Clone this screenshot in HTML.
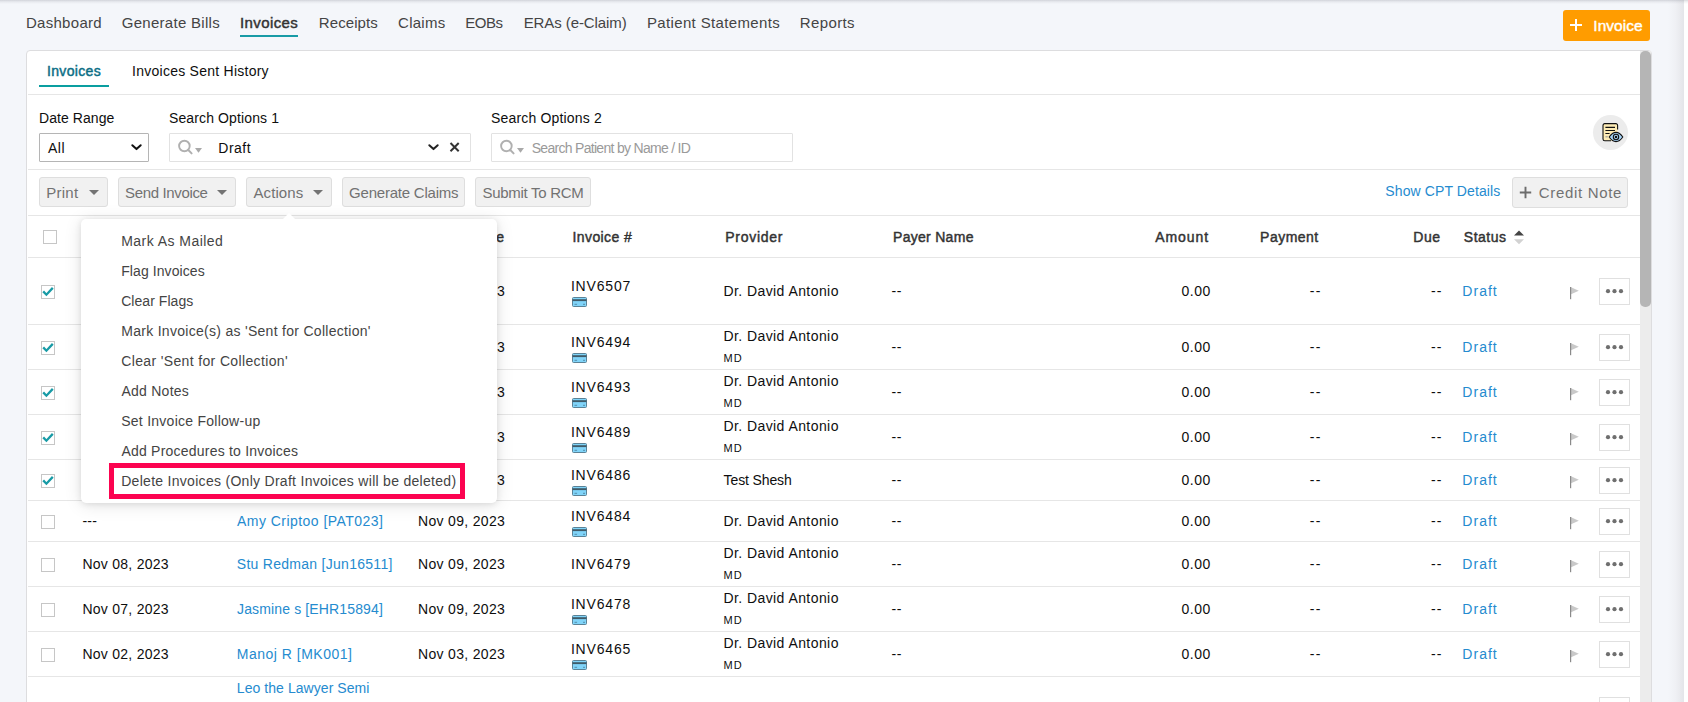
<!DOCTYPE html><html lang="en"><head><meta charset="utf-8"><title>Invoices</title><style>
*{box-sizing:border-box;margin:0;padding:0}
html,body{width:1688px;height:702px;overflow:hidden}
body{background:#f4f6fa;font-family:"Liberation Sans",sans-serif;position:relative}
.t{position:absolute;white-space:pre;display:block}
.a{position:absolute;display:block}
.topsh{left:0;top:0;width:1688px;height:4px;background:linear-gradient(rgba(120,122,135,.28),rgba(120,122,135,.1) 45%,rgba(120,122,135,0))}
.rstrip{left:1668px;top:0;width:20px;height:702px;background:linear-gradient(90deg,#f4f6fa 0,#eff0f4 40%,#e4e5e9 80%,#fff 80%,#fff 100%)}
.card{left:26px;top:50px;width:1626px;height:660px;background:#fff;border:1px solid #dddddf;border-radius:4px 4px 0 0}
.hl{left:28px;width:1612px;height:1px;background:#e6e6e6}
.navul{left:240px;top:35px;width:58px;height:2px;background:#189ba6}
.tabul{left:39px;top:85px;width:70px;height:2px;background:#0a9ea0}
.obtn{left:1563px;top:10px;width:87px;height:31px;background:#ff9c00;border-radius:3px}
.sel{left:39px;top:133px;width:110px;height:29px;border:1px solid #b5b5b5;border-radius:1px;background:#fff}
.sbox{top:133px;height:29px;border:1px solid #e2e2e2;border-radius:1px;background:#fff}
.btn{top:177px;height:30px;background:#f1f1f1;border:1px solid #dedede;border-radius:3px}
.caret{width:0;height:0;border-left:5px solid transparent;border-right:5px solid transparent;border-top:5px solid #737373}
.scrt{left:1640px;top:51px;width:11px;height:651px;background:#ececec}
.scrb{left:1640px;top:51px;width:11px;height:256px;background:#b5b5b5;border-radius:5px}
.circ{left:1593px;top:115px;width:35px;height:35px;border-radius:50%;background:#ececec}
.cb{width:14px;height:14px;border:1px solid #c6c6c6;background:#fff}
.more{width:31px;height:27px;border:1px solid #e0e0e0;background:#fff}
.menu{left:81px;top:219px;width:416px;height:284px;background:#fff;border-radius:5px;box-shadow:0 1px 6px rgba(0,0,0,.10),0 2px 18px rgba(0,0,0,.11)}
.arrow{left:282px;top:213px;width:0;height:0;border-left:7px solid transparent;border-right:7px solid transparent;border-bottom:7px solid #fff}
.red{left:109px;top:463px;width:356px;height:36px;border:5px solid #fc0350}
</style></head><body>
<i class="a rstrip"></i><i class="a topsh"></i>
<i class="a navul"></i>
<i class="a obtn"></i>
<svg class="a" style="left:1569px;top:18px" width="14" height="14" viewBox="0 0 14 14"><path d="M7 1v12M1 7h12" stroke="#fff" stroke-width="2" fill="none"/></svg>
<i class="a card"></i>
<i class="a scrt"></i><i class="a scrb"></i>
<i class="a tabul"></i>
<i class="a hl" style="top:94px"></i>
<i class="a hl" style="top:169px"></i>
<i class="a hl" style="top:215px"></i>
<i class="a hl" style="top:257px"></i>
<i class="a hl" style="top:324px"></i>
<i class="a hl" style="top:369px"></i>
<i class="a hl" style="top:414px"></i>
<i class="a hl" style="top:459px"></i>
<i class="a hl" style="top:500px"></i>
<i class="a hl" style="top:541px"></i>
<i class="a hl" style="top:586px"></i>
<i class="a hl" style="top:631px"></i>
<i class="a hl" style="top:676px"></i>
<i class="a sel"></i>
<svg class="a" style="left:130px;top:142px" width="13" height="10" viewBox="0 0 13 10"><path d="M2.300 3.200l4.200 3.900L10.700 3.200" stroke="#111" stroke-width="2" fill="none" stroke-linecap="round" stroke-linejoin="round"/></svg>
<i class="a sbox" style="left:169px;width:302px"></i>
<i class="a sbox" style="left:491px;width:302px"></i>
<svg class="a" style="left:178px;top:139px" width="26" height="16" viewBox="0 0 26 16"><circle cx="6.400" cy="7" r="5.300" stroke="#b0b0b0" stroke-width="1.900" fill="none"/><path d="M10.300 11l3.300 3.400" stroke="#b0b0b0" stroke-width="2" stroke-linecap="round"/><path d="M17 9h7l-3.5 4.8z" fill="#a9a9a9"/></svg>
<svg class="a" style="left:500px;top:139px" width="26" height="16" viewBox="0 0 26 16"><circle cx="6.400" cy="7" r="5.300" stroke="#b0b0b0" stroke-width="1.900" fill="none"/><path d="M10.300 11l3.300 3.400" stroke="#b0b0b0" stroke-width="2" stroke-linecap="round"/><path d="M17 9h7l-3.5 4.8z" fill="#a9a9a9"/></svg>
<svg class="a" style="left:427px;top:142px" width="13" height="10" viewBox="0 0 13 10"><path d="M2.300 3.200l4.200 3.900L10.700 3.200" stroke="#222" stroke-width="2" fill="none" stroke-linecap="round" stroke-linejoin="round"/></svg>
<svg class="a" style="left:448px;top:141px" width="13" height="12" viewBox="0 0 13 12"><path d="M2.500 2l8.200 8.200M10.700 2l-8.200 8.200" stroke="#333" stroke-width="2" fill="none"/></svg>
<i class="a circ"></i>
<svg class="a" style="left:1601px;top:122px" width="24" height="22" viewBox="0 0 24 22">
<rect x="2" y="1.600" width="14.600" height="17.200" rx="1.800" fill="#fdebb4"/><path d="M16.600 7.400V3.400a1.800 1.800 0 0 0-1.800-1.800H3.800a1.800 1.800 0 0 0-1.800 1.800V17a1.800 1.800 0 0 0 1.800 1.800H10" fill="none" stroke="#111" stroke-width="1.100"/>
<path d="M4.4 5.4h9.6M4.4 8.5h9.6M4.4 11.5h4.2" stroke="#111" stroke-width="1.1"/><path d="M4.4 14.8h2.4" stroke="#999" stroke-width="1.1"/>
<path d="M8.2 15c2.2-3.2 4.4-4.6 6.8-4.6s4.600 1.400 6.800 4.600c-2.200 3.200-4.400 4.600-6.800 4.600s-4.600-1.400-6.800-4.600z" fill="#a9d5f8" stroke="#111" stroke-width="1.1"/>
<circle cx="15" cy="15" r="2.7" fill="#a9d5f8" stroke="#111" stroke-width="1.1"/><rect x="13.9" y="13.9" width="2.2" height="2.2" fill="#111"/>
</svg>
<i class="a btn" style="left:39px;width:69px;height:30px"></i>
<i class="a btn" style="left:118px;width:118px;height:30px"></i>
<i class="a btn" style="left:246px;width:86px;height:30px"></i>
<i class="a btn" style="left:342px;width:123px;height:30px"></i>
<i class="a btn" style="left:475px;width:116px;height:30px"></i>
<i class="a btn" style="left:1512px;width:116px;height:31px"></i>
<i class="a caret" style="left:89px;top:190px"></i>
<i class="a caret" style="left:217px;top:190px"></i>
<i class="a caret" style="left:313px;top:190px"></i>
<svg class="a" style="left:1519px;top:186px" width="13" height="13" viewBox="0 0 13 13"><path d="M6.500 0.800v11.400M0.800 6.500h11.400" stroke="#6c6c6c" stroke-width="1.900" fill="none"/></svg>
<i class="a cb" style="left:43px;top:230px"></i>
<svg class="a" style="left:1514px;top:230px" width="10" height="15" viewBox="0 0 10 15"><path d="M0 5.600L5 0.600l5 5z" fill="#444"/><path d="M0 9.200h10l-5 5z" fill="#d2d2d2"/></svg>
<svg class="a" style="left:572px;top:297px" width="15" height="10" viewBox="0 0 15 10"><rect x="0.500" y="0.500" width="14" height="9" rx="1" fill="#80d4f9" stroke="#5b8296" stroke-width="1"/><rect x="0.500" y="2.200" width="14" height="1.900" fill="#3f5b69"/><path d="M2.500 7.300h2.600M11 7.300h2" stroke="#4f86a0" stroke-width="0.900"/></svg>
<i class="a cb" style="left:41px;top:285px"></i>
<svg class="a" style="left:41px;top:285px" width="14" height="14" viewBox="0 0 14 14"><path d="M2.200 6.400l3.200 3.300l6.400-6.800" stroke="#189ba6" stroke-width="2.300" fill="none"/></svg>
<svg class="a" style="left:1569px;top:287px" width="11" height="13" viewBox="0 0 11 13"><path d="M2 0.300L9.800 3.800L2 7.300z" fill="#c9c9c9"/><rect x="1" y="0" width="1.200" height="12.200" fill="#8a8a8a"/></svg>
<i class="a more" style="left:1599px;top:278px"></i>
<svg class="a" style="left:1604px;top:288px" width="21" height="6" viewBox="0 0 21 6"><circle cx="4" cy="3.200" r="2.100" fill="#6f6f6f"/><circle cx="10.500" cy="3.200" r="2.100" fill="#6f6f6f"/><circle cx="17" cy="3.200" r="2.100" fill="#6f6f6f"/></svg>
<svg class="a" style="left:572px;top:353px" width="15" height="10" viewBox="0 0 15 10"><rect x="0.500" y="0.500" width="14" height="9" rx="1" fill="#80d4f9" stroke="#5b8296" stroke-width="1"/><rect x="0.500" y="2.200" width="14" height="1.900" fill="#3f5b69"/><path d="M2.500 7.300h2.600M11 7.300h2" stroke="#4f86a0" stroke-width="0.900"/></svg>
<i class="a cb" style="left:41px;top:341px"></i>
<svg class="a" style="left:41px;top:341px" width="14" height="14" viewBox="0 0 14 14"><path d="M2.200 6.400l3.200 3.300l6.400-6.800" stroke="#189ba6" stroke-width="2.300" fill="none"/></svg>
<svg class="a" style="left:1569px;top:343px" width="11" height="13" viewBox="0 0 11 13"><path d="M2 0.300L9.800 3.800L2 7.300z" fill="#c9c9c9"/><rect x="1" y="0" width="1.200" height="12.200" fill="#8a8a8a"/></svg>
<i class="a more" style="left:1599px;top:334px"></i>
<svg class="a" style="left:1604px;top:344px" width="21" height="6" viewBox="0 0 21 6"><circle cx="4" cy="3.200" r="2.100" fill="#6f6f6f"/><circle cx="10.500" cy="3.200" r="2.100" fill="#6f6f6f"/><circle cx="17" cy="3.200" r="2.100" fill="#6f6f6f"/></svg>
<svg class="a" style="left:572px;top:398px" width="15" height="10" viewBox="0 0 15 10"><rect x="0.500" y="0.500" width="14" height="9" rx="1" fill="#80d4f9" stroke="#5b8296" stroke-width="1"/><rect x="0.500" y="2.200" width="14" height="1.900" fill="#3f5b69"/><path d="M2.500 7.300h2.600M11 7.300h2" stroke="#4f86a0" stroke-width="0.900"/></svg>
<i class="a cb" style="left:41px;top:386px"></i>
<svg class="a" style="left:41px;top:386px" width="14" height="14" viewBox="0 0 14 14"><path d="M2.200 6.400l3.200 3.300l6.400-6.800" stroke="#189ba6" stroke-width="2.300" fill="none"/></svg>
<svg class="a" style="left:1569px;top:388px" width="11" height="13" viewBox="0 0 11 13"><path d="M2 0.300L9.800 3.800L2 7.300z" fill="#c9c9c9"/><rect x="1" y="0" width="1.200" height="12.200" fill="#8a8a8a"/></svg>
<i class="a more" style="left:1599px;top:379px"></i>
<svg class="a" style="left:1604px;top:389px" width="21" height="6" viewBox="0 0 21 6"><circle cx="4" cy="3.200" r="2.100" fill="#6f6f6f"/><circle cx="10.500" cy="3.200" r="2.100" fill="#6f6f6f"/><circle cx="17" cy="3.200" r="2.100" fill="#6f6f6f"/></svg>
<svg class="a" style="left:572px;top:443px" width="15" height="10" viewBox="0 0 15 10"><rect x="0.500" y="0.500" width="14" height="9" rx="1" fill="#80d4f9" stroke="#5b8296" stroke-width="1"/><rect x="0.500" y="2.200" width="14" height="1.900" fill="#3f5b69"/><path d="M2.500 7.300h2.600M11 7.300h2" stroke="#4f86a0" stroke-width="0.900"/></svg>
<i class="a cb" style="left:41px;top:431px"></i>
<svg class="a" style="left:41px;top:431px" width="14" height="14" viewBox="0 0 14 14"><path d="M2.200 6.400l3.200 3.300l6.400-6.800" stroke="#189ba6" stroke-width="2.300" fill="none"/></svg>
<svg class="a" style="left:1569px;top:433px" width="11" height="13" viewBox="0 0 11 13"><path d="M2 0.300L9.800 3.800L2 7.300z" fill="#c9c9c9"/><rect x="1" y="0" width="1.200" height="12.200" fill="#8a8a8a"/></svg>
<i class="a more" style="left:1599px;top:424px"></i>
<svg class="a" style="left:1604px;top:434px" width="21" height="6" viewBox="0 0 21 6"><circle cx="4" cy="3.200" r="2.100" fill="#6f6f6f"/><circle cx="10.500" cy="3.200" r="2.100" fill="#6f6f6f"/><circle cx="17" cy="3.200" r="2.100" fill="#6f6f6f"/></svg>
<svg class="a" style="left:572px;top:486px" width="15" height="10" viewBox="0 0 15 10"><rect x="0.500" y="0.500" width="14" height="9" rx="1" fill="#80d4f9" stroke="#5b8296" stroke-width="1"/><rect x="0.500" y="2.200" width="14" height="1.900" fill="#3f5b69"/><path d="M2.500 7.300h2.600M11 7.300h2" stroke="#4f86a0" stroke-width="0.900"/></svg>
<i class="a cb" style="left:41px;top:474px"></i>
<svg class="a" style="left:41px;top:474px" width="14" height="14" viewBox="0 0 14 14"><path d="M2.200 6.400l3.200 3.300l6.400-6.800" stroke="#189ba6" stroke-width="2.300" fill="none"/></svg>
<svg class="a" style="left:1569px;top:476px" width="11" height="13" viewBox="0 0 11 13"><path d="M2 0.300L9.800 3.800L2 7.300z" fill="#c9c9c9"/><rect x="1" y="0" width="1.200" height="12.200" fill="#8a8a8a"/></svg>
<i class="a more" style="left:1599px;top:467px"></i>
<svg class="a" style="left:1604px;top:477px" width="21" height="6" viewBox="0 0 21 6"><circle cx="4" cy="3.200" r="2.100" fill="#6f6f6f"/><circle cx="10.500" cy="3.200" r="2.100" fill="#6f6f6f"/><circle cx="17" cy="3.200" r="2.100" fill="#6f6f6f"/></svg>
<svg class="a" style="left:572px;top:527px" width="15" height="10" viewBox="0 0 15 10"><rect x="0.500" y="0.500" width="14" height="9" rx="1" fill="#80d4f9" stroke="#5b8296" stroke-width="1"/><rect x="0.500" y="2.200" width="14" height="1.900" fill="#3f5b69"/><path d="M2.500 7.300h2.600M11 7.300h2" stroke="#4f86a0" stroke-width="0.900"/></svg>
<i class="a cb" style="left:41px;top:515px"></i>
<svg class="a" style="left:1569px;top:517px" width="11" height="13" viewBox="0 0 11 13"><path d="M2 0.300L9.800 3.800L2 7.300z" fill="#c9c9c9"/><rect x="1" y="0" width="1.200" height="12.200" fill="#8a8a8a"/></svg>
<i class="a more" style="left:1599px;top:508px"></i>
<svg class="a" style="left:1604px;top:518px" width="21" height="6" viewBox="0 0 21 6"><circle cx="4" cy="3.200" r="2.100" fill="#6f6f6f"/><circle cx="10.500" cy="3.200" r="2.100" fill="#6f6f6f"/><circle cx="17" cy="3.200" r="2.100" fill="#6f6f6f"/></svg>
<i class="a cb" style="left:41px;top:558px"></i>
<svg class="a" style="left:1569px;top:560px" width="11" height="13" viewBox="0 0 11 13"><path d="M2 0.300L9.800 3.800L2 7.300z" fill="#c9c9c9"/><rect x="1" y="0" width="1.200" height="12.200" fill="#8a8a8a"/></svg>
<i class="a more" style="left:1599px;top:551px"></i>
<svg class="a" style="left:1604px;top:561px" width="21" height="6" viewBox="0 0 21 6"><circle cx="4" cy="3.200" r="2.100" fill="#6f6f6f"/><circle cx="10.500" cy="3.200" r="2.100" fill="#6f6f6f"/><circle cx="17" cy="3.200" r="2.100" fill="#6f6f6f"/></svg>
<svg class="a" style="left:572px;top:615px" width="15" height="10" viewBox="0 0 15 10"><rect x="0.500" y="0.500" width="14" height="9" rx="1" fill="#80d4f9" stroke="#5b8296" stroke-width="1"/><rect x="0.500" y="2.200" width="14" height="1.900" fill="#3f5b69"/><path d="M2.500 7.300h2.600M11 7.300h2" stroke="#4f86a0" stroke-width="0.900"/></svg>
<i class="a cb" style="left:41px;top:603px"></i>
<svg class="a" style="left:1569px;top:605px" width="11" height="13" viewBox="0 0 11 13"><path d="M2 0.300L9.800 3.800L2 7.300z" fill="#c9c9c9"/><rect x="1" y="0" width="1.200" height="12.200" fill="#8a8a8a"/></svg>
<i class="a more" style="left:1599px;top:596px"></i>
<svg class="a" style="left:1604px;top:606px" width="21" height="6" viewBox="0 0 21 6"><circle cx="4" cy="3.200" r="2.100" fill="#6f6f6f"/><circle cx="10.500" cy="3.200" r="2.100" fill="#6f6f6f"/><circle cx="17" cy="3.200" r="2.100" fill="#6f6f6f"/></svg>
<svg class="a" style="left:572px;top:660px" width="15" height="10" viewBox="0 0 15 10"><rect x="0.500" y="0.500" width="14" height="9" rx="1" fill="#80d4f9" stroke="#5b8296" stroke-width="1"/><rect x="0.500" y="2.200" width="14" height="1.900" fill="#3f5b69"/><path d="M2.500 7.300h2.600M11 7.300h2" stroke="#4f86a0" stroke-width="0.900"/></svg>
<i class="a cb" style="left:41px;top:648px"></i>
<svg class="a" style="left:1569px;top:650px" width="11" height="13" viewBox="0 0 11 13"><path d="M2 0.300L9.800 3.800L2 7.300z" fill="#c9c9c9"/><rect x="1" y="0" width="1.200" height="12.200" fill="#8a8a8a"/></svg>
<i class="a more" style="left:1599px;top:641px"></i>
<svg class="a" style="left:1604px;top:651px" width="21" height="6" viewBox="0 0 21 6"><circle cx="4" cy="3.200" r="2.100" fill="#6f6f6f"/><circle cx="10.500" cy="3.200" r="2.100" fill="#6f6f6f"/><circle cx="17" cy="3.200" r="2.100" fill="#6f6f6f"/></svg>
<i class="a more" style="left:1599px;top:697px"></i>
<span class="t" style="left:25.9px;top:12.0px;font-size:15px;line-height:21px;letter-spacing:0.30px;color:#444;">Dashboard</span>
<span class="t" style="left:121.7px;top:12.0px;font-size:15px;line-height:21px;letter-spacing:0.29px;color:#444;">Generate Bills</span>
<span class="t" style="left:239.9px;top:12.0px;font-size:15px;line-height:21px;letter-spacing:0.41px;color:#333;-webkit-text-stroke:0.45px #333;">Invoices</span>
<span class="t" style="left:318.8px;top:12.0px;font-size:15px;line-height:21px;letter-spacing:0.09px;color:#444;">Receipts</span>
<span class="t" style="left:398.1px;top:12.0px;font-size:15px;line-height:21px;letter-spacing:0.24px;color:#444;">Claims</span>
<span class="t" style="left:465.3px;top:12.0px;font-size:15px;line-height:21px;letter-spacing:-0.50px;color:#444;">EOBs</span>
<span class="t" style="left:523.7px;top:12.0px;font-size:15px;line-height:21px;letter-spacing:-0.09px;color:#444;">ERAs (e-Claim)</span>
<span class="t" style="left:646.9px;top:12.0px;font-size:15px;line-height:21px;letter-spacing:0.36px;color:#444;">Patient Statements</span>
<span class="t" style="left:799.8px;top:12.0px;font-size:15px;line-height:21px;letter-spacing:0.37px;color:#444;">Reports</span>
<span class="t" style="left:1593.3px;top:15.0px;font-size:15.5px;line-height:21.5px;letter-spacing:0.03px;color:#fff;-webkit-text-stroke:0.4px #fff;">Invoice</span>
<span class="t" style="left:46.9px;top:61.0px;font-size:14px;line-height:20px;letter-spacing:0.36px;color:#0b6e85;-webkit-text-stroke:0.45px #0b6e85;">Invoices</span>
<span class="t" style="left:132.1px;top:61.0px;font-size:14px;line-height:20px;letter-spacing:0.25px;color:#0e0e0e;">Invoices Sent History</span>
<span class="t" style="left:39.1px;top:108.0px;font-size:14px;line-height:20px;letter-spacing:0.06px;color:#0e0e0e;">Date Range</span>
<span class="t" style="left:169.0px;top:108.0px;font-size:14px;line-height:20px;letter-spacing:0.12px;color:#0e0e0e;">Search Options 1</span>
<span class="t" style="left:491.0px;top:108.0px;font-size:14px;line-height:20px;letter-spacing:0.17px;color:#0e0e0e;">Search Options 2</span>
<span class="t" style="left:48.0px;top:138.0px;font-size:14px;line-height:20px;letter-spacing:0.50px;color:#0e0e0e;">All</span>
<span class="t" style="left:218.3px;top:138.0px;font-size:14px;line-height:20px;letter-spacing:0.50px;color:#0e0e0e;">Draft</span>
<span class="t" style="left:531.7px;top:138.0px;font-size:14px;line-height:20px;letter-spacing:-0.70px;color:#9a9a9a;">Search Patient by Name / ID</span>
<span class="t" style="left:46.3px;top:182.0px;font-size:15px;line-height:21px;letter-spacing:0.23px;color:#727272;">Print</span>
<span class="t" style="left:125.0px;top:182.0px;font-size:15px;line-height:21px;letter-spacing:-0.35px;color:#727272;">Send Invoice</span>
<span class="t" style="left:253.5px;top:182.0px;font-size:15px;line-height:21px;letter-spacing:0.08px;color:#727272;">Actions</span>
<span class="t" style="left:349.1px;top:182.0px;font-size:15px;line-height:21px;letter-spacing:-0.22px;color:#727272;">Generate Claims</span>
<span class="t" style="left:482.5px;top:182.0px;font-size:15px;line-height:21px;letter-spacing:-0.29px;color:#727272;">Submit To RCM</span>
<span class="t" style="left:1385.3px;top:181.0px;font-size:14px;line-height:20px;letter-spacing:0.11px;color:#258bcf;">Show CPT Details</span>
<span class="t" style="left:1538.8px;top:182.0px;font-size:15px;line-height:21px;letter-spacing:0.67px;color:#727272;">Credit Note</span>
<span class="t" style="left:418.3px;top:227.4px;font-size:14px;line-height:20px;letter-spacing:0.72px;color:#333;-webkit-text-stroke:0.45px #333;">Invoice Date</span>
<span class="t" style="left:572.5px;top:227.4px;font-size:14px;line-height:20px;letter-spacing:0.41px;color:#333;-webkit-text-stroke:0.45px #333;">Invoice #</span>
<span class="t" style="left:725.2px;top:227.4px;font-size:14px;line-height:20px;letter-spacing:0.74px;color:#333;-webkit-text-stroke:0.45px #333;">Provider</span>
<span class="t" style="left:893.0px;top:227.4px;font-size:14px;line-height:20px;letter-spacing:0.29px;color:#333;-webkit-text-stroke:0.45px #333;">Payer Name</span>
<span class="t" style="left:1155.2px;top:227.4px;font-size:14px;line-height:20px;letter-spacing:0.94px;color:#333;-webkit-text-stroke:0.45px #333;">Amount</span>
<span class="t" style="left:1260.1px;top:227.4px;font-size:14px;line-height:20px;letter-spacing:0.48px;color:#333;-webkit-text-stroke:0.45px #333;">Payment</span>
<span class="t" style="left:1413.2px;top:227.4px;font-size:14px;line-height:20px;letter-spacing:0.60px;color:#333;-webkit-text-stroke:0.45px #333;">Due</span>
<span class="t" style="left:1463.8px;top:227.4px;font-size:14px;line-height:20px;letter-spacing:0.50px;color:#333;-webkit-text-stroke:0.45px #333;">Status</span>
<span class="t" style="left:418.1px;top:281.2px;font-size:14px;line-height:20px;letter-spacing:0.31px;color:#0e0e0e;">Nov 09, 2023</span>
<span class="t" style="left:570.9px;top:275.5px;font-size:14px;line-height:20px;letter-spacing:0.82px;color:#0e0e0e;">INV6507</span>
<span class="t" style="left:723.4px;top:281.2px;font-size:14px;line-height:20px;letter-spacing:0.43px;color:#0e0e0e;">Dr. David Antonio</span>
<span class="t" style="left:891.5px;top:281.2px;font-size:14px;line-height:20px;letter-spacing:0.50px;color:#0e0e0e;">--</span>
<span class="t" style="left:1181.6px;top:281.2px;font-size:14px;line-height:20px;letter-spacing:0.47px;color:#0e0e0e;">0.00</span>
<span class="t" style="left:1309.8px;top:281.2px;font-size:14px;line-height:20px;letter-spacing:1.20px;color:#0e0e0e;">--</span>
<span class="t" style="left:1431.0px;top:281.2px;font-size:14px;line-height:20px;letter-spacing:1.20px;color:#0e0e0e;">--</span>
<span class="t" style="left:1462.3px;top:281.2px;font-size:14px;line-height:20px;letter-spacing:1.03px;color:#258bcf;">Draft</span>
<span class="t" style="left:418.1px;top:337.2px;font-size:14px;line-height:20px;letter-spacing:0.31px;color:#0e0e0e;">Nov 09, 2023</span>
<span class="t" style="left:570.9px;top:331.5px;font-size:14px;line-height:20px;letter-spacing:0.82px;color:#0e0e0e;">INV6494</span>
<span class="t" style="left:723.4px;top:326.0px;font-size:14px;line-height:20px;letter-spacing:0.43px;color:#0e0e0e;">Dr. David Antonio</span>
<span class="t" style="left:723.4px;top:349.6px;font-size:11px;line-height:17px;letter-spacing:1.10px;color:#0e0e0e;">MD</span>
<span class="t" style="left:891.5px;top:337.2px;font-size:14px;line-height:20px;letter-spacing:0.50px;color:#0e0e0e;">--</span>
<span class="t" style="left:1181.6px;top:337.2px;font-size:14px;line-height:20px;letter-spacing:0.47px;color:#0e0e0e;">0.00</span>
<span class="t" style="left:1309.8px;top:337.2px;font-size:14px;line-height:20px;letter-spacing:1.20px;color:#0e0e0e;">--</span>
<span class="t" style="left:1431.0px;top:337.2px;font-size:14px;line-height:20px;letter-spacing:1.20px;color:#0e0e0e;">--</span>
<span class="t" style="left:1462.3px;top:337.2px;font-size:14px;line-height:20px;letter-spacing:1.03px;color:#258bcf;">Draft</span>
<span class="t" style="left:418.1px;top:382.2px;font-size:14px;line-height:20px;letter-spacing:0.31px;color:#0e0e0e;">Nov 09, 2023</span>
<span class="t" style="left:570.9px;top:376.5px;font-size:14px;line-height:20px;letter-spacing:0.82px;color:#0e0e0e;">INV6493</span>
<span class="t" style="left:723.4px;top:371.0px;font-size:14px;line-height:20px;letter-spacing:0.43px;color:#0e0e0e;">Dr. David Antonio</span>
<span class="t" style="left:723.4px;top:394.6px;font-size:11px;line-height:17px;letter-spacing:1.10px;color:#0e0e0e;">MD</span>
<span class="t" style="left:891.5px;top:382.2px;font-size:14px;line-height:20px;letter-spacing:0.50px;color:#0e0e0e;">--</span>
<span class="t" style="left:1181.6px;top:382.2px;font-size:14px;line-height:20px;letter-spacing:0.47px;color:#0e0e0e;">0.00</span>
<span class="t" style="left:1309.8px;top:382.2px;font-size:14px;line-height:20px;letter-spacing:1.20px;color:#0e0e0e;">--</span>
<span class="t" style="left:1431.0px;top:382.2px;font-size:14px;line-height:20px;letter-spacing:1.20px;color:#0e0e0e;">--</span>
<span class="t" style="left:1462.3px;top:382.2px;font-size:14px;line-height:20px;letter-spacing:1.03px;color:#258bcf;">Draft</span>
<span class="t" style="left:418.1px;top:427.2px;font-size:14px;line-height:20px;letter-spacing:0.31px;color:#0e0e0e;">Nov 09, 2023</span>
<span class="t" style="left:570.9px;top:421.5px;font-size:14px;line-height:20px;letter-spacing:0.82px;color:#0e0e0e;">INV6489</span>
<span class="t" style="left:723.4px;top:416.0px;font-size:14px;line-height:20px;letter-spacing:0.43px;color:#0e0e0e;">Dr. David Antonio</span>
<span class="t" style="left:723.4px;top:439.6px;font-size:11px;line-height:17px;letter-spacing:1.10px;color:#0e0e0e;">MD</span>
<span class="t" style="left:891.5px;top:427.2px;font-size:14px;line-height:20px;letter-spacing:0.50px;color:#0e0e0e;">--</span>
<span class="t" style="left:1181.6px;top:427.2px;font-size:14px;line-height:20px;letter-spacing:0.47px;color:#0e0e0e;">0.00</span>
<span class="t" style="left:1309.8px;top:427.2px;font-size:14px;line-height:20px;letter-spacing:1.20px;color:#0e0e0e;">--</span>
<span class="t" style="left:1431.0px;top:427.2px;font-size:14px;line-height:20px;letter-spacing:1.20px;color:#0e0e0e;">--</span>
<span class="t" style="left:1462.3px;top:427.2px;font-size:14px;line-height:20px;letter-spacing:1.03px;color:#258bcf;">Draft</span>
<span class="t" style="left:418.1px;top:470.2px;font-size:14px;line-height:20px;letter-spacing:0.31px;color:#0e0e0e;">Nov 09, 2023</span>
<span class="t" style="left:570.9px;top:464.5px;font-size:14px;line-height:20px;letter-spacing:0.82px;color:#0e0e0e;">INV6486</span>
<span class="t" style="left:723.6px;top:470.2px;font-size:14px;line-height:20px;letter-spacing:-0.12px;color:#0e0e0e;">Test Shesh</span>
<span class="t" style="left:891.5px;top:470.2px;font-size:14px;line-height:20px;letter-spacing:0.50px;color:#0e0e0e;">--</span>
<span class="t" style="left:1181.6px;top:470.2px;font-size:14px;line-height:20px;letter-spacing:0.47px;color:#0e0e0e;">0.00</span>
<span class="t" style="left:1309.8px;top:470.2px;font-size:14px;line-height:20px;letter-spacing:1.20px;color:#0e0e0e;">--</span>
<span class="t" style="left:1431.0px;top:470.2px;font-size:14px;line-height:20px;letter-spacing:1.20px;color:#0e0e0e;">--</span>
<span class="t" style="left:1462.3px;top:470.2px;font-size:14px;line-height:20px;letter-spacing:1.03px;color:#258bcf;">Draft</span>
<span class="t" style="left:82.4px;top:511.2px;font-size:14px;line-height:20px;letter-spacing:0.30px;color:#0e0e0e;">---</span>
<span class="t" style="left:237.0px;top:511.2px;font-size:14px;line-height:20px;letter-spacing:0.46px;color:#258bcf;">Amy Criptoo [PAT023]</span>
<span class="t" style="left:418.1px;top:511.2px;font-size:14px;line-height:20px;letter-spacing:0.31px;color:#0e0e0e;">Nov 09, 2023</span>
<span class="t" style="left:570.9px;top:505.5px;font-size:14px;line-height:20px;letter-spacing:0.82px;color:#0e0e0e;">INV6484</span>
<span class="t" style="left:723.4px;top:511.2px;font-size:14px;line-height:20px;letter-spacing:0.43px;color:#0e0e0e;">Dr. David Antonio</span>
<span class="t" style="left:891.5px;top:511.2px;font-size:14px;line-height:20px;letter-spacing:0.50px;color:#0e0e0e;">--</span>
<span class="t" style="left:1181.6px;top:511.2px;font-size:14px;line-height:20px;letter-spacing:0.47px;color:#0e0e0e;">0.00</span>
<span class="t" style="left:1309.8px;top:511.2px;font-size:14px;line-height:20px;letter-spacing:1.20px;color:#0e0e0e;">--</span>
<span class="t" style="left:1431.0px;top:511.2px;font-size:14px;line-height:20px;letter-spacing:1.20px;color:#0e0e0e;">--</span>
<span class="t" style="left:1462.3px;top:511.2px;font-size:14px;line-height:20px;letter-spacing:1.03px;color:#258bcf;">Draft</span>
<span class="t" style="left:82.4px;top:554.2px;font-size:14px;line-height:20px;letter-spacing:0.27px;color:#0e0e0e;">Nov 08, 2023</span>
<span class="t" style="left:236.8px;top:554.2px;font-size:14px;line-height:20px;letter-spacing:0.28px;color:#258bcf;">Stu Redman [Jun16511]</span>
<span class="t" style="left:418.1px;top:554.2px;font-size:14px;line-height:20px;letter-spacing:0.31px;color:#0e0e0e;">Nov 09, 2023</span>
<span class="t" style="left:570.9px;top:554.2px;font-size:14px;line-height:20px;letter-spacing:0.82px;color:#0e0e0e;">INV6479</span>
<span class="t" style="left:723.4px;top:543.0px;font-size:14px;line-height:20px;letter-spacing:0.43px;color:#0e0e0e;">Dr. David Antonio</span>
<span class="t" style="left:723.4px;top:566.6px;font-size:11px;line-height:17px;letter-spacing:1.10px;color:#0e0e0e;">MD</span>
<span class="t" style="left:891.5px;top:554.2px;font-size:14px;line-height:20px;letter-spacing:0.50px;color:#0e0e0e;">--</span>
<span class="t" style="left:1181.6px;top:554.2px;font-size:14px;line-height:20px;letter-spacing:0.47px;color:#0e0e0e;">0.00</span>
<span class="t" style="left:1309.8px;top:554.2px;font-size:14px;line-height:20px;letter-spacing:1.20px;color:#0e0e0e;">--</span>
<span class="t" style="left:1431.0px;top:554.2px;font-size:14px;line-height:20px;letter-spacing:1.20px;color:#0e0e0e;">--</span>
<span class="t" style="left:1462.3px;top:554.2px;font-size:14px;line-height:20px;letter-spacing:1.03px;color:#258bcf;">Draft</span>
<span class="t" style="left:82.4px;top:599.2px;font-size:14px;line-height:20px;letter-spacing:0.27px;color:#0e0e0e;">Nov 07, 2023</span>
<span class="t" style="left:237.0px;top:599.2px;font-size:14px;line-height:20px;letter-spacing:0.14px;color:#258bcf;">Jasmine s [EHR15894]</span>
<span class="t" style="left:418.1px;top:599.2px;font-size:14px;line-height:20px;letter-spacing:0.31px;color:#0e0e0e;">Nov 09, 2023</span>
<span class="t" style="left:570.9px;top:593.5px;font-size:14px;line-height:20px;letter-spacing:0.82px;color:#0e0e0e;">INV6478</span>
<span class="t" style="left:723.4px;top:588.0px;font-size:14px;line-height:20px;letter-spacing:0.43px;color:#0e0e0e;">Dr. David Antonio</span>
<span class="t" style="left:723.4px;top:611.6px;font-size:11px;line-height:17px;letter-spacing:1.10px;color:#0e0e0e;">MD</span>
<span class="t" style="left:891.5px;top:599.2px;font-size:14px;line-height:20px;letter-spacing:0.50px;color:#0e0e0e;">--</span>
<span class="t" style="left:1181.6px;top:599.2px;font-size:14px;line-height:20px;letter-spacing:0.47px;color:#0e0e0e;">0.00</span>
<span class="t" style="left:1309.8px;top:599.2px;font-size:14px;line-height:20px;letter-spacing:1.20px;color:#0e0e0e;">--</span>
<span class="t" style="left:1431.0px;top:599.2px;font-size:14px;line-height:20px;letter-spacing:1.20px;color:#0e0e0e;">--</span>
<span class="t" style="left:1462.3px;top:599.2px;font-size:14px;line-height:20px;letter-spacing:1.03px;color:#258bcf;">Draft</span>
<span class="t" style="left:82.4px;top:644.2px;font-size:14px;line-height:20px;letter-spacing:0.27px;color:#0e0e0e;">Nov 02, 2023</span>
<span class="t" style="left:236.8px;top:644.2px;font-size:14px;line-height:20px;letter-spacing:0.50px;color:#258bcf;">Manoj R [MK001]</span>
<span class="t" style="left:418.1px;top:644.2px;font-size:14px;line-height:20px;letter-spacing:0.31px;color:#0e0e0e;">Nov 03, 2023</span>
<span class="t" style="left:570.9px;top:638.5px;font-size:14px;line-height:20px;letter-spacing:0.82px;color:#0e0e0e;">INV6465</span>
<span class="t" style="left:723.4px;top:633.0px;font-size:14px;line-height:20px;letter-spacing:0.43px;color:#0e0e0e;">Dr. David Antonio</span>
<span class="t" style="left:723.4px;top:656.6px;font-size:11px;line-height:17px;letter-spacing:1.10px;color:#0e0e0e;">MD</span>
<span class="t" style="left:891.5px;top:644.2px;font-size:14px;line-height:20px;letter-spacing:0.50px;color:#0e0e0e;">--</span>
<span class="t" style="left:1181.6px;top:644.2px;font-size:14px;line-height:20px;letter-spacing:0.47px;color:#0e0e0e;">0.00</span>
<span class="t" style="left:1309.8px;top:644.2px;font-size:14px;line-height:20px;letter-spacing:1.20px;color:#0e0e0e;">--</span>
<span class="t" style="left:1431.0px;top:644.2px;font-size:14px;line-height:20px;letter-spacing:1.20px;color:#0e0e0e;">--</span>
<span class="t" style="left:1462.3px;top:644.2px;font-size:14px;line-height:20px;letter-spacing:1.03px;color:#258bcf;">Draft</span>
<span class="t" style="left:236.8px;top:678.0px;font-size:14px;line-height:20px;letter-spacing:0.06px;color:#258bcf;">Leo the Lawyer Semi</span>
<i class="a menu"></i><i class="a arrow"></i>
<span class="t" style="left:121.2px;top:231.0px;font-size:14px;line-height:20px;letter-spacing:0.46px;color:#444;">Mark As Mailed</span>
<span class="t" style="left:121.2px;top:261.0px;font-size:14px;line-height:20px;letter-spacing:0.09px;color:#444;">Flag Invoices</span>
<span class="t" style="left:121.2px;top:291.0px;font-size:14px;line-height:20px;letter-spacing:0.05px;color:#444;">Clear Flags</span>
<span class="t" style="left:121.2px;top:321.0px;font-size:14px;line-height:20px;letter-spacing:0.29px;color:#444;">Mark Invoice(s) as 'Sent for Collection'</span>
<span class="t" style="left:121.2px;top:351.0px;font-size:14px;line-height:20px;letter-spacing:0.36px;color:#444;">Clear 'Sent for Collection'</span>
<span class="t" style="left:121.4px;top:381.0px;font-size:14px;line-height:20px;letter-spacing:0.26px;color:#444;">Add Notes</span>
<span class="t" style="left:121.2px;top:411.0px;font-size:14px;line-height:20px;letter-spacing:0.26px;color:#444;">Set Invoice Follow-up</span>
<span class="t" style="left:121.4px;top:441.0px;font-size:14px;line-height:20px;letter-spacing:0.22px;color:#444;">Add Procedures to Invoices</span>
<span class="t" style="left:121.2px;top:471.0px;font-size:14px;line-height:20px;letter-spacing:0.29px;color:#444;">Delete Invoices (Only Draft Invoices will be deleted)</span>
<i class="a red"></i>
</body></html>
